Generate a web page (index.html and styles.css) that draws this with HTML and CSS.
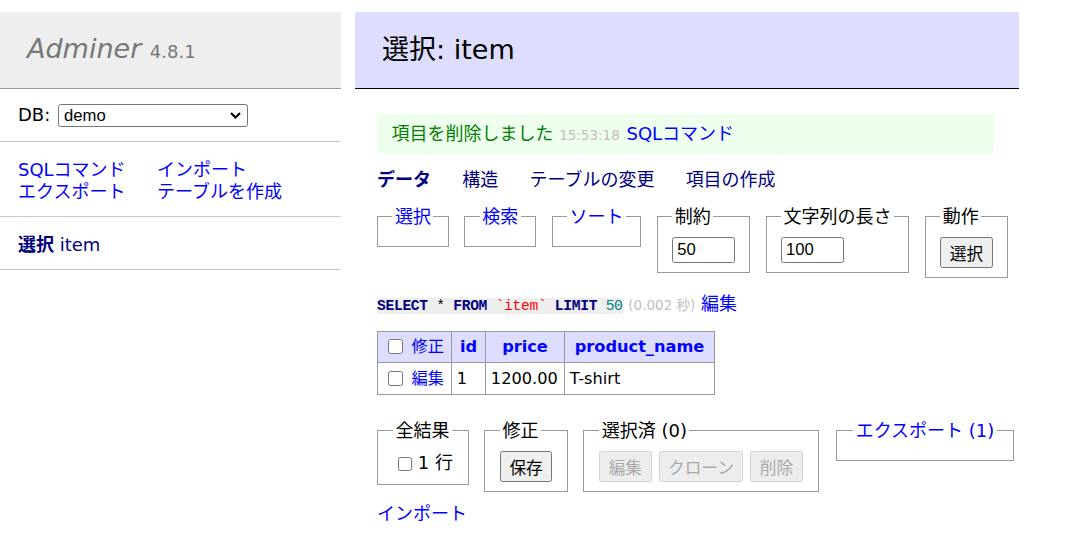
FILE: index.html
```html
<!DOCTYPE html>
<html lang="ja">
<head>
<meta charset="utf-8">
<title>選択: item - Adminer</title>
<link rel="stylesheet" href="styles.css">
</head>
<body>
<div class="page">
  <div class="menu">
    <h1><a class="brand" href="#">Adminer</a> <span class="version">4.8.1</span></h1>
    <p class="menu-block db-row">DB: <span class="select-wrap"><select class="db-select"><option>demo</option></select><svg class="chev" width="11" height="7" viewBox="0 0 11 7"><path d="M1 1l4.5 4.5L10 1" fill="none" stroke="#000" stroke-width="2"/></svg></span></p>
    <p class="menu-block menu-links"><a href="#">SQLコマンド</a><a href="#">インポート</a><a href="#">エクスポート</a><a href="#">テーブルを作成</a></p>
    <ul class="menu-block tables"><li><a class="v active" href="#">選択</a> <a class="v" href="#">item</a></li></ul>
  </div>
  <div class="content">
    <h2>選択: item</h2>
    <div class="message">項目を削除しました <span class="time">15:53:18</span> <a href="#">SQLコマンド</a></div>
    <p class="links"><a class="v active" href="#">データ</a> <a class="v" href="#">構造</a> <a class="v" href="#">テーブルの変更</a> <a class="v" href="#">項目の作成</a></p>
    <form class="search">
      <fieldset><legend><a href="#">選択</a></legend></fieldset>
      <fieldset><legend><a href="#">検索</a></legend></fieldset>
      <fieldset><legend><a href="#">ソート</a></legend></fieldset>
      <fieldset><legend>制約</legend><input class="size" type="text" value="50"></fieldset>
      <fieldset><legend>文字列の長さ</legend><input class="size" type="text" value="100"></fieldset>
      <fieldset><legend>動作</legend><button class="btn" type="button">選択</button></fieldset>
    </form>
    <p class="sql"><code><a class="kw" href="#">SELECT</a> * <a class="kw" href="#">FROM</a> <span class="bac">`item`</span> <a class="kw" href="#">LIMIT</a> <span class="num">50</span></code> <span class="time">(0.002 秒)</span> <a href="#">編集</a></p>
    <table class="data">
      <colgroup><col class="c-check"><col class="c-id"><col class="c-price"><col class="c-name"></colgroup>
      <thead>
        <tr><td class="first"><input type="checkbox" class="cb"> <a href="#">修正</a></td><th><a href="#">id</a></th><th><a href="#">price</a></th><th><a href="#">product_name</a></th></tr>
      </thead>
      <tbody>
        <tr><td class="first"><input type="checkbox" class="cb"> <a href="#">編集</a></td><td>1</td><td>1200.00</td><td>T-shirt</td></tr>
      </tbody>
    </table>
    <div class="footer">
      <fieldset><legend>全結果</legend><label class="all"><input type="checkbox" class="cb"> 1 行</label></fieldset>
      <fieldset><legend>修正</legend><button class="btn" type="button">保存</button></fieldset>
      <fieldset><legend>選択済 (0)</legend><div class="btns"><button class="btn" type="button" disabled>編集</button><button class="btn" type="button" disabled>クローン</button><button class="btn" type="button" disabled>削除</button></div></fieldset>
      <fieldset class="export"><legend><a href="#">エクスポート (1)</a></legend></fieldset>
    </div>
    <p class="import"><a href="#">インポート</a></p>
  </div>
</div>
</body>
</html>
```

FILE: styles.css
```css
body {
  margin: 0;
  background: #fff;
  color: #000;
  font: 18px/1.25 "DejaVu Sans", "Noto Sans CJK JP", sans-serif;
}
a { color: blue; text-decoration: none; }
a.v { color: navy; }
.active { font-weight: bold; }

.page {
  display: flex;
  align-items: flex-start;
  padding-top: 12px;
}
.menu { width: 341px; flex: none; }

h1 {
  margin: 0;
  font-size: 27px;
  line-height: 33.75px;
  padding: 19.5px 27px;
  background: #eee;
  border-bottom: 1px solid #999;
  font-weight: normal;
  font-style: italic;
}
h1 .brand { color: #777; }
.version { color: #777; font-size: 18px; font-style: normal; }

.menu-block {
  margin: 0;
  padding: 14.4px 18px;
  border-bottom: 1px solid #ccc;
}
.db-row { padding-top: 14.8px; }
.select-wrap {
  position: relative;
  display: inline-block;
  vertical-align: middle;
  margin-left: 2px;
}
.db-select {
  appearance: none;
  -webkit-appearance: none;
  display: block;
  width: 190px;
  height: 23px;
  box-sizing: border-box;
  border: 1px solid #767676;
  border-radius: 2.5px;
  background: #fff;
  color: #000;
  font: 16.67px "Liberation Sans", Arial, sans-serif;
  padding: 0 0 0 5px;
  margin: 0;
}
.chev { position: absolute; right: 7px; top: 8px; }

.menu-links {
  display: grid;
  grid-template-columns: 139px auto;
  padding-top: 16.2px;
  padding-bottom: 12.6px;
}
.menu-links a { white-space: nowrap; }
.tables {
  list-style: none;
  padding-top: 17px;
  padding-bottom: 11.8px;
}

.content { margin-left: 36px; width: 642px; }

h2 {
  margin: 0 0 25px -22px;
  font-size: 27px;
  line-height: 33.75px;
  padding: 21px 27px;
  background: #ddf;
  border-bottom: 1px solid #000;
  font-weight: normal;
  color: #000;
}

.message {
  margin: 0 25px 0 0;
  padding: 9.5px 14.4px 8.5px;
  background: #efe;
  color: green;
}
.time { color: silver; font-size: 13.5px; }
.message a { margin-left: 1px; }

.links { margin: 14.4px 0 0; }
.links a { margin-right: 25.5px; white-space: nowrap; }

fieldset {
  margin: 0;
  padding: 9px 14.4px;
  border: 1px solid #999;
}
legend { padding: 0 2.5px; }

.search {
  display: flex;
  gap: 15.5px;
  align-items: flex-start;
  margin: 14.4px 0 0;
}
.size {
  display: block;
  width: 62.5px;
  height: 26px;
  box-sizing: border-box;
  margin: 0;
  padding: 0 4px;
  border: 1px solid #767676;
  border-radius: 2.5px;
  font: 16.67px "Liberation Sans", Arial, sans-serif;
  color: #000;
  background: #fff;
}
.btn {
  display: block;
  height: 31px;
  margin: 0;
  padding: 0 8.5px;
  border: 1px solid #767676;
  border-radius: 2.5px;
  background: #efefef;
  color: #000;
  font: 16.67px "DejaVu Sans", "Noto Sans CJK JP", sans-serif;
}
.btn:disabled {
  background: #ededed;
  border-color: #d2d2d2;
  color: #a9a9a9;
}

.sql { margin: 15px 0 0; }
code {
  font-family: "Liberation Mono", monospace;
  font-size: 14.6px;
  letter-spacing: -0.29px;
  background: #eee;
}
code .kw { color: navy; font-weight: bold; }
code .bac { color: red; }
code .num { color: #007f7f; }

.data {
  border-collapse: collapse;
  table-layout: fixed;
  width: 337px;
  font-size: 16.2px;
  line-height: 1.25;
  margin: 15.6px 0 0;
}
.c-check { width: 74px; }
.c-id { width: 34px; }
.c-price { width: 79px; }
.c-name { width: 150px; }
.data td, .data th {
  border: 1px solid #999;
  padding: 3.24px 4.86px;
  white-space: nowrap;
  overflow: hidden;
}
.data thead td, .data thead th { background: #ddf; }
.data thead th { text-align: center; padding: 3.24px 4px; }
.data thead tr { height: 31px; }
.data tbody tr { height: 32px; }
.cb {
  width: 15px;
  height: 15px;
  margin: 0 3px 0 5.5px;
  vertical-align: -2px;
}

.footer {
  display: flex;
  gap: 15px;
  align-items: flex-start;
  margin-top: 24.5px;
}
.footer fieldset { padding: 9px 15px; }
.all { display: block; line-height: 24px; }
.all .cb { margin: 0 0 0 5px; width: 14px; height: 14px; }
.btns { display: flex; gap: 7px; }
.footer .export { margin-left: 2px; padding: 9px 16.5px; }

.import { margin: 11px 0 0; }
```
